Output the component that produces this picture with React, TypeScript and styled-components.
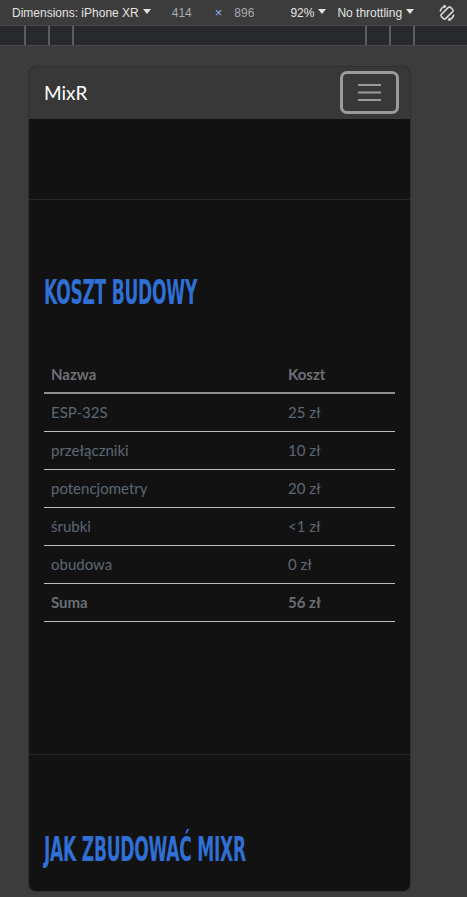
import styled, { createGlobalStyle } from "styled-components";

const GlobalStyle = createGlobalStyle`
  html, body {
    margin: 0;
    padding: 0;
    background: #3c3c3c;
  }
  body {
    font-family: "Liberation Sans", Arial, sans-serif;
  }
  * {
    box-sizing: border-box;
  }
`;

const Shell = styled.div`
  width: 467px;
  height: 897px;
  overflow: hidden;
  display: flex;
  flex-direction: column;
  background: #3c3c3c;
`;

const Toolbar = styled.div`
  height: 26px;
  display: flex;
  align-items: center;
  padding-left: 12px;
  color: #e3e3e3;
  font-size: 12px;
  background: #3c3c3c;
  border-bottom: 1px solid #4a4a4a;
`;

const ToolItem = styled.div<{ $gap: number; $muted?: boolean }>`
  display: flex;
  align-items: center;
  gap: 4px;
  flex-shrink: 0;
  margin-left: ${(p) => p.$gap}px;
  color: ${(p) => (p.$muted ? "#a8abaf" : "#e3e3e3")};
  white-space: nowrap;
`;

const Caret = styled.span`
  width: 0;
  height: 0;
  border-left: 4px solid transparent;
  border-right: 4px solid transparent;
  border-top: 5px solid #e3e3e3;
  margin-top: -3px;
`;

const Times = styled.span`
  margin-left: 23px;
  color: #8ab4f8;
  font-size: 13px;
`;

const Ruler = styled.div`
  height: 20px;
  display: flex;
  justify-content: space-between;
  background: #28292c;
  border-bottom: 1px solid #4a4a4a;
`;

const TickGroup = styled.div<{ $left?: number; $right?: number }>`
  display: flex;
  gap: 22px;
  padding-left: ${(p) => p.$left ?? 0}px;
  padding-right: ${(p) => p.$right ?? 0}px;
`;

const Tick = styled.span`
  width: 2px;
  height: 100%;
  background: #5c5d5f;
`;

const Viewport = styled.div`
  flex: 1;
  padding: 21px 0 0 29px;
`;

const Device = styled.div`
  width: 381px;
  height: 824px;
  border-radius: 7px;
  overflow: hidden;
  background: #121212;
  box-shadow: 0 0 2px rgba(0, 0, 0, 0.6);
  font-family: Lato, "Open Sans", sans-serif;
`;

const Navbar = styled.nav`
  height: 52px;
  display: flex;
  align-items: center;
  justify-content: space-between;
  padding: 0 11px 1px 15px;
  background: #383838;
`;

const Brand = styled.span`
  color: #ffffff;
  font-size: 19px;
`;

const Toggler = styled.button`
  width: 59px;
  height: 43px;
  border: 3px solid #9b9b9b;
  border-radius: 7px;
  background: transparent;
  display: flex;
  align-items: center;
  justify-content: center;
  padding: 0;
`;

const Section = styled.section<{ $top: number; $bottom: number; $line?: boolean }>`
  padding: ${(p) => p.$top}px 15px ${(p) => p.$bottom}px;
  border-bottom: ${(p) => (p.$line ? "1px solid #262626" : "none")};
`;

const Heading = styled.h2`
  margin: 0;
  height: 33px;
  color: #2f6fd6;
  font-family: "DejaVu Sans Condensed", "DejaVu Sans", sans-serif;
  font-stretch: condensed;
  font-weight: bold;
  font-size: 34px;
  line-height: 33px;
  letter-spacing: -0.5px;
  white-space: nowrap;
  transform: scaleX(0.56);
  transform-origin: left center;
`;

const Table = styled.table`
  width: 100%;
  margin-top: 47px;
  border-collapse: collapse;
  font-size: 15px;
`;

const Th = styled.th<{ $w?: number }>`
  height: 37px;
  padding: 0 7px;
  text-align: left;
  font-weight: bold;
  color: #6c7076;
  border-bottom: 2px solid #8b8e93;
  width: ${(p) => (p.$w ? `${p.$w}px` : "auto")};
`;

const Td = styled.td<{ $bold?: boolean }>`
  height: 38px;
  padding: 0 7px;
  color: ${(p) => (p.$bold ? "#6a6e73" : "#5d6875")};
  font-weight: ${(p) => (p.$bold ? "bold" : "normal")};
  border-bottom: 1px solid #bdbdbd;
`;

const rows = [
  ["ESP-32S", "25 zł"],
  ["przełączniki", "10 zł"],
  ["potencjometry", "20 zł"],
  ["śrubki", "<1 zł"],
  ["obudowa", "0 zł"],
];

function RotateIcon() {
  return (
    <svg width="20" height="20" viewBox="0 0 20 20" fill="none" stroke="#d6d6d6" strokeWidth="1.6">
      <rect x="7" y="3.5" width="6" height="13" rx="1.5" transform="rotate(45 10 10)" />
      <path d="M3.2 8.5 A7 7 0 0 1 8 3.2" />
      <path d="M16.8 11.5 A7 7 0 0 1 12 16.8" />
      <path d="M6.5 2.5 L8.3 3.2 L7.4 5" />
      <path d="M13.5 17.5 L11.7 16.8 L12.6 15" />
    </svg>
  );
}

export default function App() {
  return (
    <Shell>
      <GlobalStyle />
      <Toolbar>
        <ToolItem $gap={0}>
          Dimensions: iPhone XR <Caret />
        </ToolItem>
        <ToolItem $gap={21} $muted>
          414
        </ToolItem>
        <Times>×</Times>
        <ToolItem $gap={12} $muted>
          896
        </ToolItem>
        <ToolItem $gap={36}>
          92% <Caret />
        </ToolItem>
        <ToolItem $gap={11}>
          No throttling <Caret />
        </ToolItem>
        <ToolItem $gap={23}>
          <RotateIcon />
        </ToolItem>
      </Toolbar>
      <Ruler>
        <TickGroup $left={24}>
          <Tick />
          <Tick />
          <Tick />
        </TickGroup>
        <TickGroup $right={52}>
          <Tick />
          <Tick />
          <Tick />
        </TickGroup>
      </Ruler>
      <Viewport>
        <Device>
          <Navbar>
            <Brand>MixR</Brand>
            <Toggler aria-label="menu">
              <svg width="23" height="17" viewBox="0 0 23 17" stroke="#9a9a9a" strokeWidth="2">
                <line x1="0" y1="1" x2="23" y2="1" />
                <line x1="0" y1="8.5" x2="23" y2="8.5" />
                <line x1="0" y1="16" x2="23" y2="16" />
              </svg>
            </Toggler>
          </Navbar>
          <Section $top={80} $bottom={0} $line />
          <Section $top={76} $bottom={132} $line>
            <Heading>KOSZT BUDOWY</Heading>
            <Table>
              <thead>
                <tr>
                  <Th $w={237}>Nazwa</Th>
                  <Th>Koszt</Th>
                </tr>
              </thead>
              <tbody>
                {rows.map(([name, cost]) => (
                  <tr key={name}>
                    <Td>{name}</Td>
                    <Td>{cost}</Td>
                  </tr>
                ))}
                <tr>
                  <Td $bold>Suma</Td>
                  <Td $bold>56 zł</Td>
                </tr>
              </tbody>
            </Table>
          </Section>
          <Section $top={78} $bottom={0}>
            <Heading>JAK ZBUDOWAĆ MIXR</Heading>
          </Section>
        </Device>
      </Viewport>
    </Shell>
  );
}
